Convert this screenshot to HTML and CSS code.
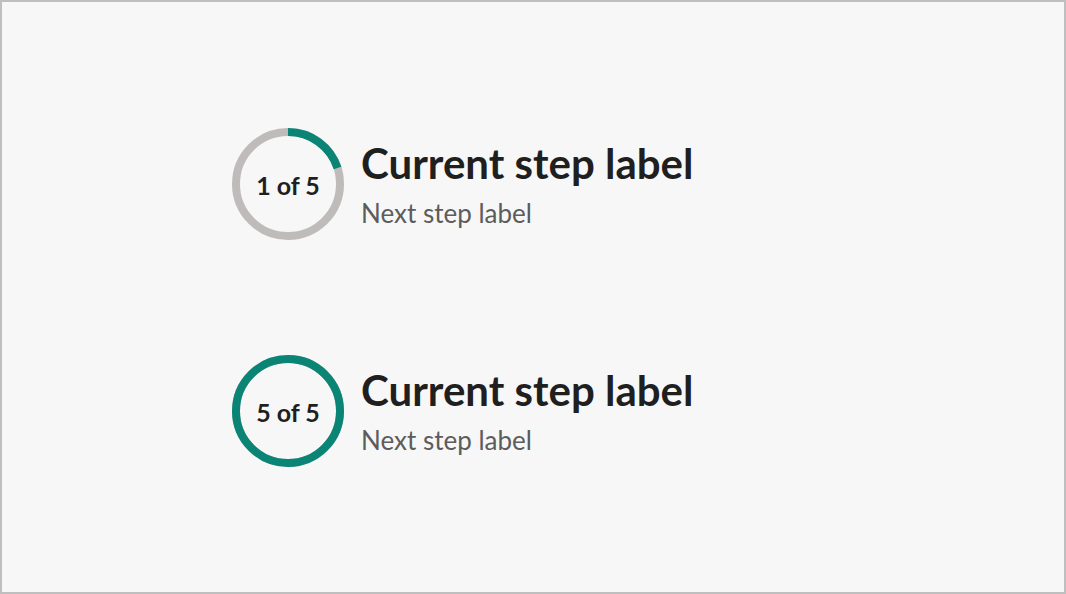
FILE: index.html
```html
<!DOCTYPE html>
<html lang="en">
<head>
<meta charset="utf-8">
<title>Progress steps</title>
<link rel="stylesheet" href="styles.css">
</head>
<body>
<main class="frame">
  <div class="stack">
    <div class="step">
      <div class="ring">
        <svg class="ring-svg" width="112" height="112" viewBox="0 0 112 112" aria-hidden="true">
          <circle class="track" cx="56" cy="56" r="52"></circle>
          <circle class="bar" cx="56" cy="56" r="52" style="stroke-dasharray: 65.35 326.73"></circle>
        </svg>
        <span class="ring-label">1 of 5</span>
      </div>
      <div class="labels">
        <div class="current">Current step label</div>
        <div class="next">Next step label</div>
      </div>
    </div>
    <div class="step">
      <div class="ring">
        <svg class="ring-svg" width="112" height="112" viewBox="0 0 112 112" aria-hidden="true">
          <circle class="track" cx="56" cy="56" r="52"></circle>
          <circle class="bar" cx="56" cy="56" r="52" style="stroke-dasharray: 326.73 326.73"></circle>
        </svg>
        <span class="ring-label">5 of 5</span>
      </div>
      <div class="labels">
        <div class="current">Current step label</div>
        <div class="next">Next step label</div>
      </div>
    </div>
  </div>
</main>
</body>
</html>
```

FILE: styles.css
```css
html, body {
  margin: 0;
  padding: 0;
}
body {
  background: #f7f7f7;
  font-family: Lato, "Noto Sans", sans-serif;
  color: #1f1f1f;
}
.frame {
  box-sizing: border-box;
  width: 1066px;
  height: 594px;
  border: 2px solid #bfbfbf;
  background: #f7f7f7;
  display: flex;
  align-items: center;
  padding-left: 230px;
}
.stack {
  display: flex;
  flex-direction: column;
  gap: 115px;
}
.step {
  display: flex;
  align-items: center;
  gap: 17px;
}
.ring {
  position: relative;
  width: 112px;
  height: 112px;
  flex: none;
}
.ring-svg {
  display: block;
  transform: rotate(-90deg);
}
.track {
  fill: none;
  stroke: #bfbbbb;
  stroke-width: 8;
}
.bar {
  fill: none;
  stroke: #0a8474;
  stroke-width: 8;
}
.ring-label {
  position: absolute;
  inset: 0;
  display: flex;
  align-items: center;
  justify-content: center;
  padding-top: 3px;
  font-size: 25px;
  font-weight: 700;
  color: #1f1f1f;
}
.labels {
  display: flex;
  flex-direction: column;
  gap: 12px;
}
.current {
  font-size: 42px;
  font-weight: 700;
  line-height: 46px;
  color: #1f1f1f;
}
.next {
  font-size: 26px;
  font-weight: 400;
  line-height: 30px;
  color: #5c5c5c;
}
```
